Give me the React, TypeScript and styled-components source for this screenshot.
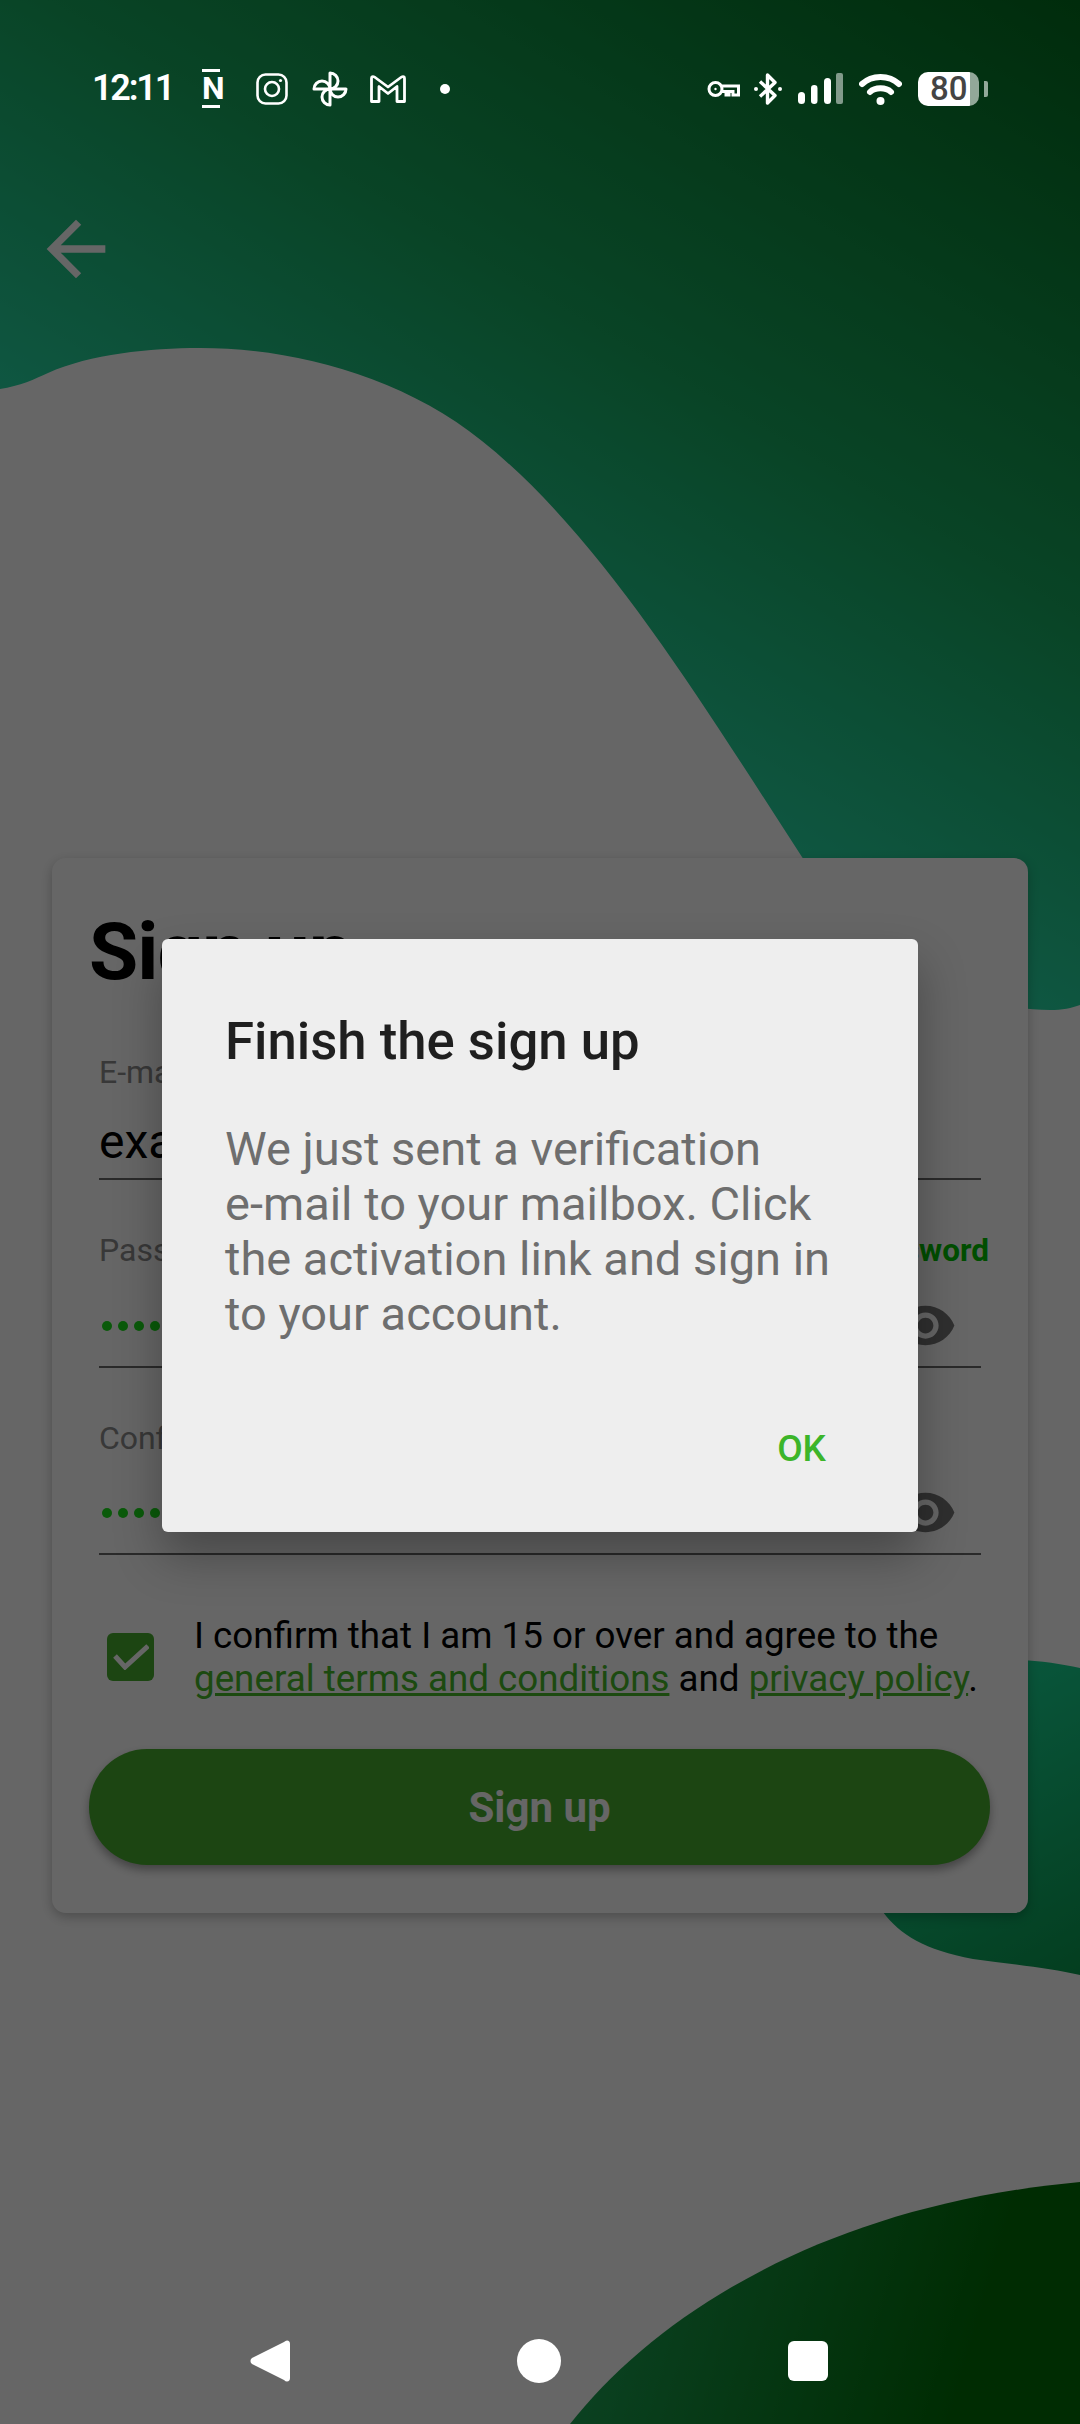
import React from "react";
import styled, { createGlobalStyle } from "styled-components";

const GlobalStyle = createGlobalStyle`
  html, body {
    margin: 0;
    padding: 0;
    background: #fff;
  }
  * {
    box-sizing: border-box;
  }
`;

const Page = styled.div`
  position: relative;
  width: 1080px;
  height: 2424px;
  overflow: hidden;
  display: flex;
  flex-direction: column;
  font-family: Roboto, "Liberation Sans", sans-serif;
`;
const Backdrop = styled.svg`
  position: absolute;
  inset: 0;
  width: 1080px;
  height: 2424px;
`;
const Scrim = styled.div`
  position: absolute;
  inset: 0;
  z-index: 2;
  background: rgba(0, 0, 0, 0.6);
  display: flex;
  justify-content: center;
  align-items: center;
  padding-top: 46px;
`;

const StatusBar = styled.div`
  position: relative;
  z-index: 3;
  height: 205px;
  padding: 69px 92px 0 92px;
  display: flex;
  justify-content: space-between;
  align-items: flex-start;
  color: #fff;
`;
const StatusGroup = styled.div`
  height: 39px;
  display: flex;
  align-items: center;
  gap: ${(props: { $gap: number }) => props.$gap}px;
`;
const Clock = styled.span`
  font-size: 36px;
  font-weight: 600;
  letter-spacing: -2.2px;
  line-height: 39px;
  margin-right: 5px;
`;
const NotionMark = styled.span`
  width: 18px;
  height: 39px;
  margin-right: 12px;
  border-top: 3px solid #fff;
  border-bottom: 3px solid #fff;
  font-size: 32px;
  font-weight: 700;
  line-height: 33px;
  text-align: center;
`;
const GmailIcon = styled.svg`
  margin-left: -2px;
`;
const BluetoothIcon = styled.svg`
  margin-left: -2px;
`;
const NotifDot = styled.span`
  width: 10px;
  height: 10px;
  margin-left: 10px;
  border-radius: 50%;
  background: #fff;
`;
const Battery = styled.div`
  display: flex;
  align-items: center;
  gap: 5px;
`;
const BatteryBody = styled.div`
  width: 61px;
  height: 34px;
  border-radius: 10px;
  background: linear-gradient(to right, #fff 52px, #92a899 52px);
  color: #444;
  font-size: 33px;
  font-weight: 500;
  line-height: 34px;
  padding-left: 12px;
`;
const BatteryNub = styled.span`
  width: 4px;
  height: 16px;
  border-radius: 0 2px 2px 0;
  background: #92a899;
`;

const BackButton = styled.div`
  position: relative;
  z-index: 1;
  height: 88px;
  padding-left: 32px;
  display: flex;
  color: #fff;
`;

const Card = styled.div`
  position: relative;
  z-index: 1;
  width: 976px;
  margin: 565px 0 0 52px;
  padding: 47px 38px 48px 37px;
  border-radius: 14px;
  background: #fff;
  box-shadow: 0 4px 12px rgba(0, 0, 0, 0.25);
`;
const Title = styled.h1`
  margin: 0 0 53px;
  font-size: 80px;
  font-weight: 700;
  letter-spacing: -1px;
  line-height: 94px;
  color: #000;
`;
const Field = styled.div`
  margin: 0 9px 50px 10px;
`;
const LabelRow = styled.div`
  display: flex;
  justify-content: space-between;
  align-items: baseline;
  margin-right: -8px;
`;
const Label = styled.label`
  font-size: 32px;
  line-height: 40px;
  color: #8c8c8c;
`;
const Forgot = styled.a`
  font-size: 31.5px;
  font-weight: 700;
  line-height: 40px;
  color: #00c200;
`;
const InputText = styled.div`
  margin-top: 22px;
  padding-bottom: 8px;
  border-bottom: 2px solid #6a6a6a;
  font-size: 48px;
  line-height: 56px;
  color: #000;
`;
const PasswordRow = styled.div`
  height: 97px;
  padding: 23px 24px 9px 3px;
  border-bottom: 2px solid #6a6a6a;
  display: flex;
  justify-content: space-between;
  align-items: center;
  color: #777;
`;
const Dots = styled.div`
  display: flex;
  gap: 6px;
`;
const Dot = styled.span`
  width: 10px;
  height: 10px;
  border-radius: 50%;
  background: #1ae01a;
`;
const Consent = styled.div`
  margin-top: 59px;
  padding-left: 18px;
  display: flex;
  align-items: center;
  gap: 40px;
`;
const CheckBox = styled.div`
  flex: none;
  width: 47px;
  height: 48px;
  border-radius: 6px;
  background: #46ad2d;
  display: flex;
  justify-content: center;
  align-items: center;
`;
const ConsentText = styled.div`
  font-size: 36.75px;
  line-height: 43px;
  white-space: nowrap;
  color: #000;
`;
const TermsLink = styled.a`
  color: #48b82a;
  text-decoration: underline;
`;
const SubmitButton = styled.button`
  display: block;
  width: 901px;
  height: 116px;
  margin-top: 49px;
  border: 0;
  border-radius: 58px;
  background: #46ad2d;
  box-shadow: 0 5px 10px rgba(0, 0, 0, 0.35);
  color: #fff;
  font-family: inherit;
  font-size: 42px;
  font-weight: 700;
`;

const Dialog = styled.div`
  width: 756px;
  height: 593px;
  padding: 72px 64px 0 63px;
  border-radius: 6px;
  background: #eeeeee;
  box-shadow: 0 24px 48px rgba(0, 0, 0, 0.3);
  display: flex;
  flex-direction: column;
`;
const DialogTitle = styled.h2`
  margin: 0;
  font-size: 52.7px;
  font-weight: 500;
  line-height: 60px;
  color: #1f1f1f;
`;
const DialogBody = styled.p`
  margin: 50px 0 0;
  font-size: 47px;
  line-height: 55.3px;
  color: #6e6e6e;
`;
const DialogActions = styled.div`
  margin-top: 85px;
  padding-right: 28px;
  display: flex;
  justify-content: flex-end;
`;
const DialogButton = styled.span`
  font-size: 37px;
  font-weight: 500;
  line-height: 44px;
  color: #3cb52a;
`;

const NavBar = styled.div`
  position: relative;
  z-index: 3;
  margin-top: auto;
  height: 85px;
  padding: 0 252px 0 250px;
  display: flex;
  justify-content: space-between;
  align-items: flex-start;
`;
const NavCircle = styled.span`
  width: 44px;
  height: 44px;
  border-radius: 50%;
  background: #fff;
`;
const NavSquare = styled.span`
  width: 40px;
  height: 40px;
  margin-top: 2px;
  border-radius: 6px;
  background: #fff;
`;

const Eye = () => (
  <svg width="63" height="63" viewBox="0 0 24 24" fill="currentColor">
    <path d="M12 4.5C7 4.5 2.73 7.61 1 12c1.73 4.39 6 7.5 11 7.5s9.27-3.11 11-7.5c-1.73-4.39-6-7.5-11-7.5zM12 17c-2.76 0-5-2.24-5-5s2.24-5 5-5 5 2.24 5 5-2.24 5-5 5zm0-8c-1.66 0-3 1.34-3 3s1.34 3 3 3 3-1.34 3-3-1.34-3-3-3z" />
  </svg>
);

const PasswordDots = () => (
  <Dots>
    {Array.from({ length: 8 }).map((_, i) => (
      <Dot key={i} />
    ))}
  </Dots>
);

function App() {
  return (
    <Page>
      <GlobalStyle />
      <Backdrop viewBox="0 0 1080 2424">
        <defs>
          <linearGradient id="topGreen" gradientUnits="userSpaceOnUse" x1="1080" y1="0" x2="624" y2="760">
            <stop offset="0" stopColor="#026e1e" />
            <stop offset="0.6" stopColor="#17aa5f" />
            <stop offset="1" stopColor="#26d8a4" />
          </linearGradient>
          <linearGradient id="sideGreen" gradientUnits="userSpaceOnUse" x1="900" y1="1660" x2="1080" y2="1980">
            <stop offset="0" stopColor="#1ae2a2" />
            <stop offset="1" stopColor="#0a9a4e" />
          </linearGradient>
          <linearGradient id="bottomGreen" gradientUnits="userSpaceOnUse" x1="620" y1="2300" x2="960" y2="2400">
            <stop offset="0" stopColor="#1aa050" />
            <stop offset="1" stopColor="#006e06" />
          </linearGradient>
        </defs>
        <rect width="1080" height="2424" fill="url(#topGreen)" />
        <path
          d="M0 389 C20 386 35 379 48 373 C90 354 150 348 200 348 C290 348 400 375 482 441 C600 535 700 700 802 857 C870 960 960 1010 1050 1010 C1062 1010 1072 1008 1080 1005 L1080 2424 L0 2424 Z"
          fill="#fff"
        />
        <path
          d="M1080 1668 C1060 1664 1040 1660 1010 1660 C960 1660 880 1700 870 1800 C864 1860 870 1890 883 1912 C900 1935 925 1950 973 1959 C1010 1964 1050 1968 1080 1975 Z"
          fill="url(#sideGreen)"
        />
        <path d="M570 2424 C660 2310 830 2205 1080 2182 L1080 2424 Z" fill="url(#bottomGreen)" />
      </Backdrop>

      <StatusBar>
        <StatusGroup $gap={24}>
          <Clock>12:11</Clock>
          <NotionMark>N</NotionMark>
          <svg width="32" height="32" viewBox="0 0 32 32" fill="none" stroke="#fff" strokeWidth="2.6">
            <rect x="1.5" y="1.5" width="29" height="29" rx="8" />
            <circle cx="16" cy="16" r="7" />
            <circle cx="24.5" cy="7.5" r="1.6" fill="#fff" stroke="none" />
          </svg>
          <svg width="36" height="36" viewBox="0 0 36 36" fill="none" stroke="#fff" strokeWidth="3" strokeLinejoin="round">
            <path d="M18 18 V2 A8 8 0 0 1 18 18 Z" />
            <path d="M18 18 H34 A8 8 0 0 1 18 18 Z" />
            <path d="M18 18 V34 A8 8 0 0 1 18 18 Z" />
            <path d="M18 18 H2 A8 8 0 0 1 18 18 Z" />
          </svg>
          <GmailIcon width="36" height="28" viewBox="0 0 36 28" fill="none" stroke="#fff" strokeWidth="2.8" strokeLinejoin="round">
            <path d="M1.5 26.5 V3.5 Q1.5 1 4.5 2 L18 12 L31.5 2 Q34.5 1 34.5 3.5 V26.5 H27 V11.5 L18 18.5 L9 11.5 V26.5 Z" />
          </GmailIcon>
          <NotifDot />
        </StatusGroup>
        <StatusGroup $gap={16}>
          <svg width="33" height="18" viewBox="0 0 33 18" fill="none" stroke="#fff" strokeWidth="3">
            <circle cx="8.5" cy="9" r="6.5" />
            <circle cx="8.5" cy="9" r="1.2" fill="#fff" stroke="none" />
            <path d="M15 6 H31.5 V15 H26 V11.5 H22 V15 H19 V11.5 H15" />
          </svg>
          <BluetoothIcon width="28" height="32" viewBox="0 0 28 32" fill="none" stroke="#fff" strokeWidth="3.4">
            <path d="M6 8.5 L21 22.5 L13.5 30 V2 L21 9.5 L6 23.5" strokeLinejoin="round" />
            <circle cx="2" cy="16" r="2" fill="#fff" stroke="none" />
            <circle cx="26" cy="16" r="2" fill="#fff" stroke="none" />
          </BluetoothIcon>
          <svg width="45" height="31" viewBox="0 0 45 31" fill="#fff">
            <rect x="0" y="19" width="7" height="12" rx="3.5" />
            <rect x="13" y="12" width="6.5" height="19" rx="3.2" />
            <rect x="26" y="5" width="7" height="26" rx="3.5" />
            <rect x="38" y="0" width="7" height="31" rx="2" opacity="0.5" />
          </svg>
          <svg width="43" height="32" viewBox="0 0 43 32" fill="none" stroke="#fff" strokeWidth="6" strokeLinecap="round">
            <path d="M3 11 C13 1.5 30 1.5 40 11" />
            <path d="M11 19 C16 14 27 14 32 19" />
            <circle cx="21.5" cy="28" r="4" fill="#fff" stroke="none" />
          </svg>
          <Battery>
            <BatteryBody>80</BatteryBody>
            <BatteryNub />
          </Battery>
        </StatusGroup>
      </StatusBar>

      <BackButton>
        <svg width="88" height="88" viewBox="0 0 24 24" fill="currentColor">
          <path d="M20 11H7.83l5.59-5.59L12 4l-8 8 8 8 1.41-1.41L7.83 13H20v-2z" />
        </svg>
      </BackButton>

      <Card>
        <Title>Sign up</Title>
        <Field>
          <Label>E-mail</Label>
          <InputText>example@email.com</InputText>
        </Field>
        <Field>
          <LabelRow>
            <Label>Password</Label>
            <Forgot>Forgot password</Forgot>
          </LabelRow>
          <PasswordRow>
            <PasswordDots />
            <Eye />
          </PasswordRow>
        </Field>
        <Field>
          <Label>Confirm password</Label>
          <PasswordRow>
            <PasswordDots />
            <Eye />
          </PasswordRow>
        </Field>
        <Consent>
          <CheckBox>
            <svg width="36" height="26" viewBox="0 0 36 26" fill="none" stroke="#fff" strokeWidth="5">
              <path d="M2 12 L12 23 L35 2" />
            </svg>
          </CheckBox>
          <ConsentText>
            I confirm that I am 15 or over and agree to the
            <br />
            <TermsLink>general terms and conditions</TermsLink> and <TermsLink>privacy policy</TermsLink>.
          </ConsentText>
        </Consent>
        <SubmitButton>Sign up</SubmitButton>
      </Card>

      <Scrim>
        <Dialog>
          <DialogTitle>Finish the sign up</DialogTitle>
          <DialogBody>
            We just sent a verification
            <br />
            e-mail to your mailbox. Click
            <br />
            the activation link and sign in
            <br />
            to your account.
          </DialogBody>
          <DialogActions>
            <DialogButton>OK</DialogButton>
          </DialogActions>
        </Dialog>
      </Scrim>

      <NavBar>
        <svg width="40" height="44" viewBox="0 0 40 44">
          <path
            d="M37 1.5 C39 1.5 40 3 40 5 V39 C40 41 39 42.5 37 42.5 C36 42.5 35 42 34 41 L2 25 C0 23.5 0 20.5 2 19 L34 3 C35 2 36 1.5 37 1.5 Z"
            fill="#fff"
          />
        </svg>
        <NavCircle />
        <NavSquare />
      </NavBar>
    </Page>
  );
}

export default App;
